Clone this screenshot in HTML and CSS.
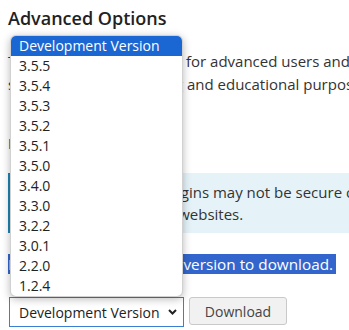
FILE: index.html
```html
<!DOCTYPE html>
<html lang="en">
<head>
<meta charset="utf-8">
<title>Advanced Options</title>
<link rel="stylesheet" href="styles.css">
</head>
<body>
<div class="page">
  <h2 class="title">Advanced Options</h2>
  <p class="intro">These versions are solely for advanced users and developers who want to test<br>should be used in testing and educational purposes only.</p>
  <p class="label">Important notice</p>
  <div class="notice">Old versions of the plugins may not be secure or stable on current<br>compatible with most websites.</div>
  <p class="hint"><span class="selected">Please select the proper version to download.</span></p>
  <div class="controls">
    <div class="select-wrap">
      <select class="select">
        <option>Development Version</option>
        <option>3.5.5</option>
      </select>
      <svg class="chevron" width="9" height="6" viewBox="0 0 9 6"><path d="M1 1 L4.5 4.5 L8 1" fill="none" stroke="#222" stroke-width="2"/></svg>
    </div>
    <button class="btn">Download</button>
  </div>

  <ul class="popup">
    <li class="opt active">Development Version</li>
    <li class="opt">3.5.5</li>
    <li class="opt">3.5.4</li>
    <li class="opt">3.5.3</li>
    <li class="opt">3.5.2</li>
    <li class="opt">3.5.1</li>
    <li class="opt">3.5.0</li>
    <li class="opt">3.4.0</li>
    <li class="opt">3.3.0</li>
    <li class="opt">3.2.2</li>
    <li class="opt">3.0.1</li>
    <li class="opt">2.2.0</li>
    <li class="opt">1.2.4</li>
  </ul>
</div>
</body>
</html>
```

FILE: styles.css
```css
html, body {
  margin: 0;
  padding: 0;
  overflow: hidden;
  background: #fff;
}
body {
  font-family: "Open Sans", "Liberation Sans", sans-serif;
  color: #333;
}
.page {
  position: relative;
  width: 640px;
  padding: 6px 8px 0 8px;
}
.title {
  margin: 0;
  font-size: 18px;
  line-height: 24px;
  font-weight: 600;
  color: #222;
}
.intro {
  margin: 20px 0 0 0;
  font-size: 15px;
  line-height: 23px;
  white-space: nowrap;
}
.label {
  margin: 36px 0 0 0;
  font-size: 15px;
  line-height: 22px;
  font-weight: 600;
  color: #333;
}
.notice {
  margin-top: 19px;
  padding: 8px 14px 8px 12px;
  background: #e5f3f9;
  border-left: 3px solid #1d86b3;
  font-size: 15px;
  line-height: 22px;
  white-space: nowrap;
}
.hint {
  margin: 18px 0 0 0;
  font-size: 15.3px;
  line-height: 26px;
}
.selected {
  background: #3366cc;
  color: #fff;
  padding-right: 3px;
}
.controls {
  margin-top: 20px;
  display: flex;
  align-items: flex-start;
  gap: 5px;
  padding-left: 1px;
}
.select-wrap {
  position: relative;
  width: 175px;
  height: 30px;
}
.select {
  appearance: none;
  -webkit-appearance: none;
  width: 175px;
  height: 30px;
  box-sizing: border-box;
  margin: 0;
  padding: 0 0 0 9px;
  border: 1px solid #3a80d2;
  border-radius: 0;
  background: #fff;
  font-family: "Open Sans", "Liberation Sans", sans-serif;
  font-size: 14px;
  color: #222;
  outline: none;
}
.chevron {
  position: absolute;
  left: 159px;
  top: 12px;
  pointer-events: none;
}
.btn {
  width: 98px;
  height: 28px;
  margin: 0;
  padding: 0;
  box-sizing: border-box;
  border: 1px solid #c9c9c9;
  border-radius: 3px;
  background: #f1f1f1;
  font-family: "Open Sans", "Liberation Sans", sans-serif;
  font-size: 14px;
  color: #444;
}
.popup {
  position: absolute;
  left: 10px;
  top: 35px;
  width: 173px;
  margin: 0;
  padding: 0;
  list-style: none;
  box-sizing: border-box;
  background: #fff;
  border: 1px solid rgba(0, 0, 0, 0.18);
  border-radius: 6px;
  overflow: hidden;
  box-shadow: 0 2px 8px rgba(0, 0, 0, 0.28);
}
.opt {
  height: 20px;
  line-height: 20px;
  padding-left: 8px;
  font-size: 14px;
  color: #222;
}
.opt.active {
  background: #1a67d3;
  color: #fff;
}
```
